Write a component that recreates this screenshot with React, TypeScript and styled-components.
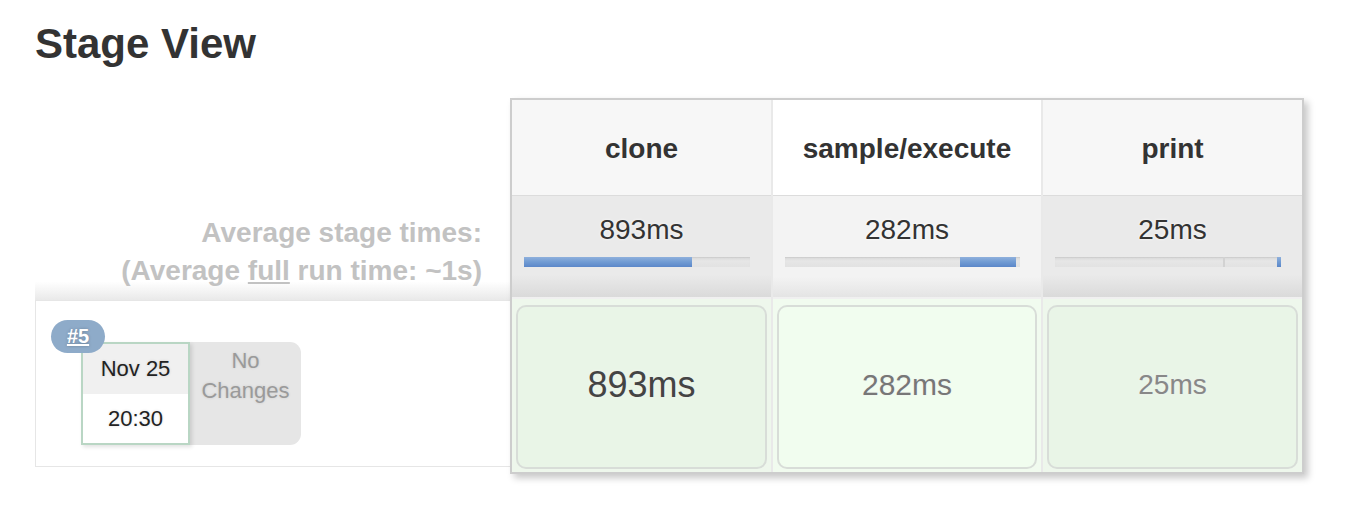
import React from 'react'
import styled, { createGlobalStyle } from 'styled-components'

const GlobalStyle = createGlobalStyle`
  html, body {
    margin: 0;
    padding: 0;
    background: #fff;
  }
  body {
    font-family: "Liberation Sans", Arial, Helvetica, sans-serif;
    color: #333;
  }
`

interface IStage {
  name: string
  avg: string
  barOffset: number
  barWidth: number
  divider?: number
  duration: string
  durationSize: number
  durationColor: string
}

const stages: IStage[] = [
  { name: 'clone', avg: '893ms', barOffset: 0, barWidth: 168, duration: '893ms', durationSize: 36, durationColor: '#444' },
  { name: 'sample/execute', avg: '282ms', barOffset: 175, barWidth: 56, duration: '282ms', durationSize: 30, durationColor: '#777' },
  { name: 'print', avg: '25ms', barOffset: 222, barWidth: 4, divider: 168, duration: '25ms', durationSize: 28, durationColor: '#888' }
]

const columnWidths = [259, 268, 259]

const Page = styled.div`
  padding: 21px 0 40px 35px;
`

const Title = styled.h2`
  margin: 0 0 31px 0;
  font-size: 42px;
  line-height: 46px;
  font-weight: bold;
  color: #333;
`

const Board = styled.div`
  display: flex;
  align-items: flex-start;
`

const LeftColumn = styled.div`
  width: 475px;
  display: flex;
  flex-direction: column;
`

const LeftHeader = styled.div`
  height: 99px;
`

const AverageLabel = styled.div`
  height: 86px;
  padding: 17px 28px 0 0;
  text-align: right;
  font-size: 28px;
  line-height: 38px;
  font-weight: bold;
  color: #c2c2c2;
  background: linear-gradient(to bottom, #fff 0, #fff 82%, #f3f3f3 92%, #e9e9e9 100%);

  u {
    text-decoration: underline;
  }
`

const LeftBuildRow = styled.div`
  border: 1px solid #e6e6e6;
  border-right: none;
  padding: 41px 0 0 45px;
  box-sizing: border-box;
  height: 167px;
`

const BuildInfo = styled.div`
  position: relative;
  display: flex;
  align-items: stretch;
`

const BuildBadge = styled.div`
  position: absolute;
  top: -22px;
  left: -30px;
  width: 54px;
  height: 33px;
  border-radius: 17px;
  background: #8eabc9;
  display: flex;
  align-items: center;
  justify-content: center;
  z-index: 2;

  a {
    color: #fff;
    font-size: 20px;
    font-weight: bold;
    text-decoration: underline;
    text-shadow: 0 0 3px rgba(0, 0, 0, 0.25);
  }
`

const DateBox = styled.div`
  width: 105px;
  border: 2px solid #b9d6c4;
  background: #fff;
  display: flex;
  flex-direction: column;
  font-size: 22px;
  color: #222;
  text-align: center;
  box-shadow: 2px 2px 4px rgba(0, 0, 0, 0.12);
  z-index: 1;
`

const DatePart = styled.div<{ $shade?: boolean }>`
  height: ${props => props.$shade ? '50px' : '49px'};
  line-height: ${props => props.$shade ? '50px' : '49px'};
  background: ${props => props.$shade ? '#f0f0f0' : '#fff'};
  text-shadow: 0 0 3px rgba(0, 0, 0, 0.15);
`

const ChangesBox = styled.div`
  width: 111px;
  height: 99px;
  padding-top: 4px;
  background: #e6e6e6;
  border-radius: 0 11px 11px 0;
  text-align: center;
  font-size: 22px;
  line-height: 30px;
  color: #9a9a9a;
  text-shadow: 0 0 3px rgba(0, 0, 0, 0.12);
`

const Panel = styled.div`
  display: flex;
  gap: 2px;
  background: #e9e9e9;
  border: 2px solid #cdcdcd;
  box-shadow: 4px 4px 7px rgba(0, 0, 0, 0.22);
`

const Column = styled.div`
  display: flex;
  flex-direction: column;
`

const StageHeader = styled.div<{ $hover?: boolean }>`
  height: 96px;
  padding-top: 2px;
  box-sizing: border-box;
  display: flex;
  align-items: center;
  justify-content: center;
  background: ${props => props.$hover ? '#fff' : '#f7f7f7'};
  border-bottom: 1px solid #dcdcdc;
  font-size: 28px;
  line-height: 32px;
  font-weight: bold;
  color: #333;
`

const StageAverage = styled.div<{ $hover?: boolean }>`
  height: 83px;
  padding-top: 18px;
  background: ${props => props.$hover
    ? 'linear-gradient(to bottom, #f3f3f3 0, #f3f3f3 80%, #e4e4e4 100%)'
    : 'linear-gradient(to bottom, #eaeaea 0, #eaeaea 78%, #dadada 100%)'};
  border-bottom: 2px solid #f0f0f0;
  text-align: center;
  font-size: 28px;
  line-height: 32px;
  color: #333;
  text-shadow: 0 0 3px rgba(255, 255, 255, 0.9);
`

const Track = styled.div`
  position: relative;
  height: 10px;
  margin: 11px 21px 0 12px;
  background: linear-gradient(to bottom, #d9d9d9 0, #e6e6e6 40%, #e2e2e2 100%);
  box-shadow: inset 0 1px 1px rgba(0, 0, 0, 0.06);
`

const TrackFill = styled.div`
  position: absolute;
  top: 0;
  height: 10px;
  background: linear-gradient(to bottom, #8fb0dc 0, #739dd4 45%, #5b87c9 100%);
`

const TrackDivider = styled.div`
  position: absolute;
  top: 0;
  width: 2px;
  height: 10px;
  background: #d2d2d2;
`

const StageCellWrap = styled.div<{ $hover?: boolean }>`
  height: 173px;
  padding: 6px 4px 3px 4px;
  box-sizing: border-box;
  background: ${props => props.$hover ? '#f1fbef' : '#eef7ec'};
`

const StageCell = styled.div<{ $hover?: boolean }>`
  height: 100%;
  box-sizing: border-box;
  border: 2px solid #d8ddd8;
  border-radius: 10px;
  background: ${props => props.$hover ? '#f1fdef' : '#e9f5e7'};
  display: flex;
  align-items: center;
  justify-content: center;
`

const Duration = styled.span<{ $size: number, $color: string }>`
  font-size: ${props => props.$size}px;
  color: ${props => props.$color};
  text-shadow: 0 0 3px rgba(255, 255, 255, 0.9), 0 0 2px rgba(0, 0, 0, 0.1);
  margin-top: -4px;
`

const App: React.FC = () => {
  return (
    <Page>
      <GlobalStyle />
      <Title>Stage View</Title>
      <Board>
        <LeftColumn>
          <LeftHeader />
          <AverageLabel>
            Average stage times:<br />
            (Average <u>full</u> run time: ~1s)
          </AverageLabel>
          <LeftBuildRow>
            <BuildInfo>
              <BuildBadge><a>#5</a></BuildBadge>
              <DateBox>
                <DatePart $shade>Nov 25</DatePart>
                <DatePart>20:30</DatePart>
              </DateBox>
              <ChangesBox>No<br />Changes</ChangesBox>
            </BuildInfo>
          </LeftBuildRow>
        </LeftColumn>
        <Panel>
          {stages.map((stage, i) => {
            const hover = i === 1
            return (
              <Column key={stage.name} style={{ width: columnWidths[i] }}>
                <StageHeader $hover={hover}>{stage.name}</StageHeader>
                <StageAverage $hover={hover}>
                  {stage.avg}
                  <Track>
                    {stage.divider !== undefined && <TrackDivider style={{ left: stage.divider }} />}
                    <TrackFill style={{ left: stage.barOffset, width: stage.barWidth }} />
                  </Track>
                </StageAverage>
                <StageCellWrap $hover={hover}>
                  <StageCell $hover={hover}>
                    <Duration $size={stage.durationSize} $color={stage.durationColor}>{stage.duration}</Duration>
                  </StageCell>
                </StageCellWrap>
              </Column>
            )
          })}
        </Panel>
      </Board>
    </Page>
  )
}

export default App
